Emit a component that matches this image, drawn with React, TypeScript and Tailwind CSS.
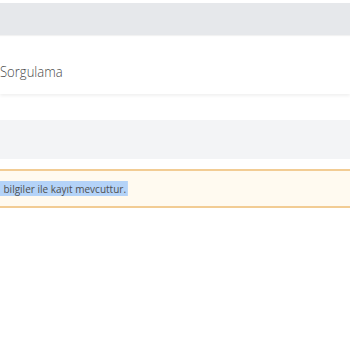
export default function App() {
  return (
    <div className="w-[350px] h-[350px] bg-white overflow-hidden" style={{ fontFamily: '"Open Sans", sans-serif' }}>
      <div className="pt-[3px]">
        <div className="h-[32px] bg-[#e6e8eb] shadow-[0_1px_1px_rgba(0,0,0,0.05)]" />
      </div>
      <div className="h-[59px] pt-[27px] text-[14.5px] font-light leading-[20px] text-[#4a4a4a] shadow-[0_2px_3px_rgba(0,0,0,0.06)]">
        <span className="inline-block origin-left scale-x-[0.9] whitespace-nowrap">Sorgulama</span>
      </div>
      <div className="h-[26px]" />
      <div className="h-[39px] bg-[#f3f4f6]" />
      <div className="h-[10px]" />
      <div className="h-[39px] bg-[#fffaf0] border-y-2 border-[#f2cc94] flex items-center text-[11.5px] text-[#4f4f4f]">
        <span className="inline-block origin-left scale-x-[0.87] whitespace-nowrap bg-[#b4d3f8] pl-[4px] pr-[2px] leading-[15px]">bilgiler ile kayıt mevcuttur.</span>
      </div>
    </div>
  );
}
